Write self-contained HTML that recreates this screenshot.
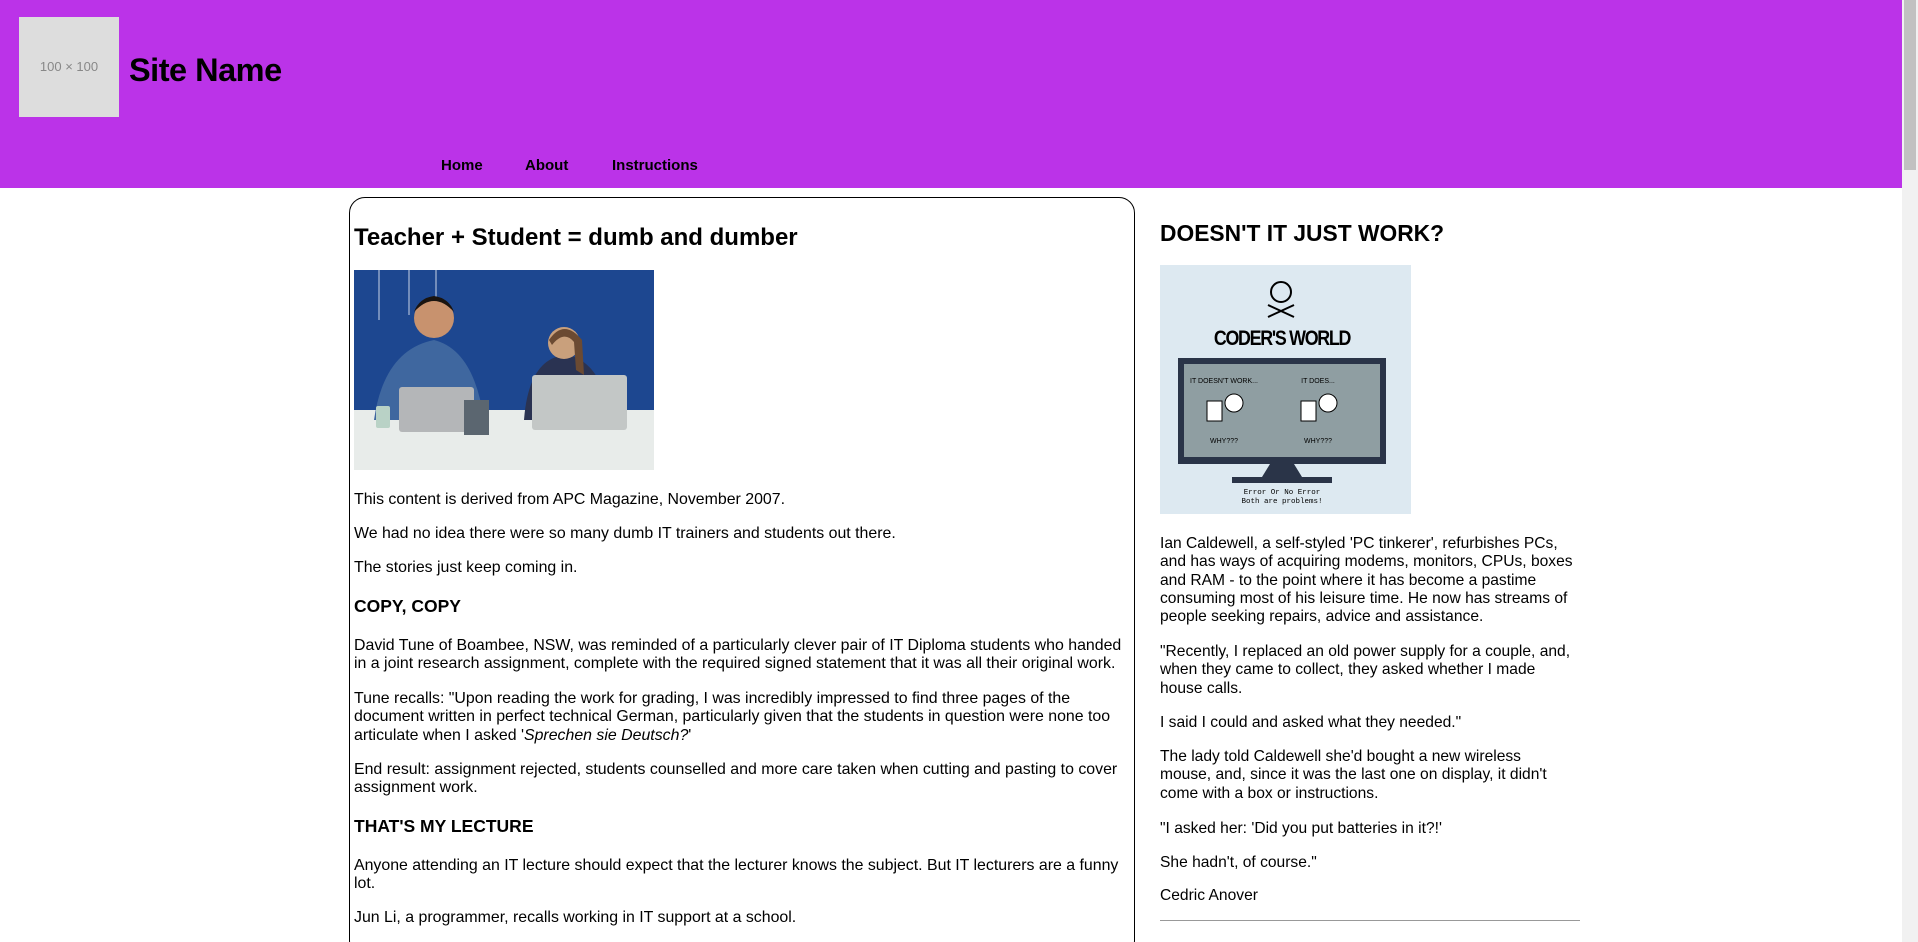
<!DOCTYPE html>
<html style="overflow:hidden;height:942px"><head><meta charset="utf-8"><style>
*{box-sizing:border-box}
body{margin:0;width:1918px;height:942px;overflow:hidden;background:#fff;font-family:"Liberation Sans",sans-serif;color:#000;position:relative}
.hdr{position:absolute;left:0;top:0;width:1902px;height:188px;background:#bb33e8}
.logo{position:absolute;left:19px;top:17px;width:100px;height:100px;background:#ddd;color:#888;font-size:13px;line-height:100px;text-align:center}
.site{position:absolute;left:129px;top:52px;font-size:32.5px;font-weight:bold;letter-spacing:-0.5px}
.nav{position:absolute;top:157px;font-size:15px;font-weight:bold}
.sb{position:absolute;left:1902px;top:0;width:16px;height:942px;background:#f1f1f1}
.sb div{position:absolute;left:2px;top:0;width:12px;height:170px;background:#c1c1c1}
.main{position:absolute;left:349px;top:197px;width:786px;height:760px;border:1px solid #000;border-radius:16px}
.t{position:absolute;white-space:nowrap;font-size:15.9px;line-height:18.3px}
.s{font-size:15.6px}
.h{position:absolute;white-space:nowrap;font-weight:bold}
hr{position:absolute;left:1160px;top:920px;width:420px;margin:0;border:0;border-top:1px solid #999}
</style></head><body>
<div class="hdr">
<div class="logo">100 × 100</div>
<div class="site">Site Name</div>
<div class="nav" style="left:441px">Home</div>
<div class="nav" style="left:525px">About</div>
<div class="nav" style="left:612px">Instructions</div>
</div>
<div class="sb"><div></div></div>
<div class="main"></div>
<div class="h" style="left:354px;top:224px;font-size:24px">Teacher + Student = dumb and dumber</div>
<svg style="position:absolute;left:354px;top:270px" width="300" height="200" viewBox="0 0 300 200">
<rect width="300" height="200" fill="#1d4790"/>
<rect x="0" y="140" width="300" height="60" fill="#e8ecea"/>
<g stroke="#c9d3e6" stroke-width="1"><line x1="25" y1="0" x2="25" y2="50"/><line x1="55" y1="0" x2="55" y2="45"/><line x1="82" y1="0" x2="82" y2="60"/></g>
<path d="M20 150 Q30 80 80 70 Q120 80 130 150Z" fill="#3f679f"/>
<circle cx="80" cy="48" r="20" fill="#c8926e"/>
<path d="M60 42 Q80 20 100 42 Q95 28 80 26 Q65 28 60 42Z" fill="#1a1410"/>
<path d="M170 150 Q175 85 215 85 Q250 95 255 150Z" fill="#2a3352"/>
<circle cx="210" cy="73" r="16" fill="#c9a07c"/>
<path d="M195 70 Q210 48 228 70 L230 105 L222 100 L220 72 Q210 60 198 75Z" fill="#6b4a32"/>
<rect x="45" y="117" width="75" height="45" rx="3" fill="#b4b6b8"/>
<rect x="178" y="105" width="95" height="55" rx="3" fill="#c3c7c6"/>
<rect x="110" y="130" width="25" height="35" fill="#5b6670"/>
<rect x="22" y="136" width="14" height="22" rx="2" fill="#b9d2c6"/>
</svg>
<div class="t" style="left:354px;top:491px">This content is derived from APC Magazine, November 2007.</div>
<div class="t" style="left:354px;top:525px">We had no idea there were so many dumb IT trainers and students out there.</div>
<div class="t" style="left:354px;top:559px">The stories just keep coming in.</div>
<div class="h" style="left:354px;top:596px;font-size:17.5px">COPY, COPY</div>
<div class="t" style="left:354px;top:637px">David Tune of Boambee, NSW, was reminded of a particularly clever pair of IT Diploma students who handed<br>in a joint research assignment, complete with the required signed statement that it was all their original work.</div>
<div class="t" style="left:354px;top:690px">Tune recalls: "Upon reading the work for grading, I was incredibly impressed to find three pages of the<br>document written in perfect technical German, particularly given that the students in question were none too<br>articulate when I asked '<i>Sprechen sie Deutsch?</i>'</div>
<div class="t" style="left:354px;top:761px">End result: assignment rejected, students counselled and more care taken when cutting and pasting to cover<br>assignment work.</div>
<div class="h" style="left:354px;top:816px;font-size:17.5px">THAT'S MY LECTURE</div>
<div class="t" style="left:354px;top:857px">Anyone attending an IT lecture should expect that the lecturer knows the subject. But IT lecturers are a funny<br>lot.</div>
<div class="t" style="left:354px;top:909px">Jun Li, a programmer, recalls working in IT support at a school.</div>

<div class="h" style="left:1160px;top:220px;font-size:22.8px">DOESN'T IT JUST WORK?</div>
<svg style="position:absolute;left:1160px;top:265px" width="251" height="249" viewBox="0 0 251 249">
<rect width="251" height="249" fill="#dde9f1"/>
<circle cx="121" cy="27" r="10" fill="none" stroke="#000" stroke-width="2"/>
<path d="M108 40 L134 52 M134 40 L108 52" stroke="#000" stroke-width="2"/>
<text x="122" y="80" text-anchor="middle" font-family="Liberation Sans" font-weight="bold" font-size="21" letter-spacing="-1.5" transform="translate(122 0) scale(0.85 1) translate(-122 0)">CODER'S WORLD</text>
<rect x="18" y="93" width="208" height="106" fill="#2a3448"/>
<rect x="24" y="99" width="196" height="93" fill="#8f9ea2"/>
<text x="64" y="118" text-anchor="middle" font-family="Liberation Sans" font-size="7">IT DOESN'T WORK...</text>
<text x="158" y="118" text-anchor="middle" font-family="Liberation Sans" font-size="7">IT DOES...</text>
<text x="64" y="178" text-anchor="middle" font-family="Liberation Sans" font-size="7">WHY???</text>
<text x="158" y="178" text-anchor="middle" font-family="Liberation Sans" font-size="7">WHY???</text>
<rect x="47" y="136" width="15" height="20" fill="#fff" stroke="#000"/><circle cx="74" cy="138" r="9" fill="#fff" stroke="#000"/>
<rect x="141" y="136" width="15" height="20" fill="#fff" stroke="#000"/><circle cx="168" cy="138" r="9" fill="#fff" stroke="#000"/>
<path d="M110 199 L134 199 L142 212 L102 212Z" fill="#2a3448"/>
<rect x="72" y="212" width="100" height="6" fill="#2a3448"/>
<text x="122" y="229" text-anchor="middle" font-family="Liberation Mono" font-size="7.5">Error Or No Error</text>
<text x="122" y="238" text-anchor="middle" font-family="Liberation Mono" font-size="7.5">Both are problems!</text>
</svg>
<div class="t s" style="left:1160px;top:535px">Ian Caldewell, a self-styled 'PC tinkerer', refurbishes PCs,<br>and has ways of acquiring modems, monitors, CPUs, boxes<br>and RAM - to the point where it has become a pastime<br>consuming most of his leisure time. He now has streams of<br>people seeking repairs, advice and assistance.</div>
<div class="t s" style="left:1160px;top:643px">"Recently, I replaced an old power supply for a couple, and,<br>when they came to collect, they asked whether I made<br>house calls.</div>
<div class="t s" style="left:1160px;top:714px">I said I could and asked what they needed."</div>
<div class="t s" style="left:1160px;top:748px">The lady told Caldewell she'd bought a new wireless<br>mouse, and, since it was the last one on display, it didn't<br>come with a box or instructions.</div>
<div class="t s" style="left:1160px;top:820px">"I asked her: 'Did you put batteries in it?!'</div>
<div class="t s" style="left:1160px;top:854px">She hadn't, of course."</div>
<div class="t s" style="left:1160px;top:887px">Cedric Anover</div>
<hr>
</body></html>
